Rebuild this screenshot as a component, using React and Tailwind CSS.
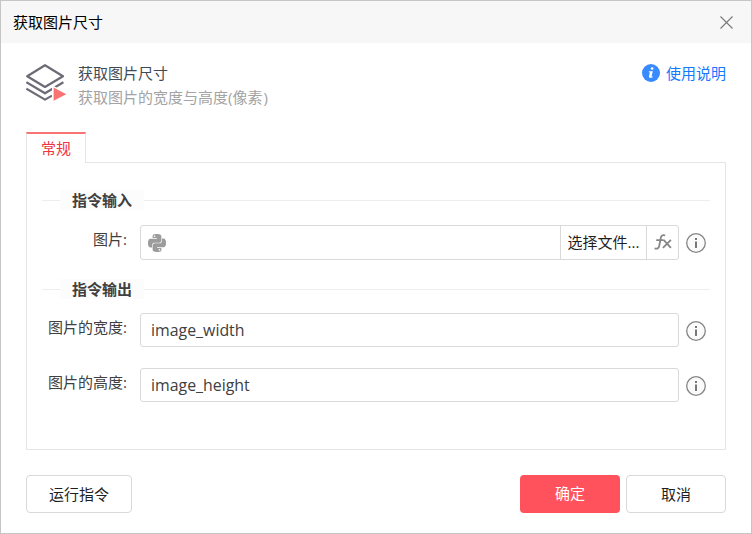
import React from "react";
import { SiPython } from "react-icons/si";

function LayersIcon() {
  return (
    <svg width="42" height="40" viewBox="0 0 42 40" fill="none" className="mt-px shrink-0">
      <g stroke="#6d6c76" strokeWidth="2.2" strokeLinejoin="round">
        <path d="M19 2.2 37 13.2 19 24 1.2 13.2Z" />
        <path d="M0.4 19.2 19 30.3 37.4 19.2" />
        <path d="M0.4 25.6 19 36.6 26 32.6" />
      </g>
      <path d="M26 22V41L43 31.5Z" fill="#fff" />
      <path d="M27.6 24.4V37.8L40.3 31.2Z" fill="#fa7373" />
    </svg>
  );
}

function InfoIcon() {
  return (
    <svg width="20" height="20" viewBox="0 0 20 20" className="ml-[7px] shrink-0">
      <circle cx="10" cy="10" r="9.3" fill="#fafafa" stroke="#858585" strokeWidth="1.3" />
      <rect x="9" y="5" width="2" height="2" fill="#777" />
      <rect x="9" y="8.5" width="2" height="6.5" fill="#777" />
    </svg>
  );
}

function Section({ children }) {
  return (
    <div className="flex h-5 items-center">
      <div className="h-px w-[18px] bg-[#ededed]" />
      <div className="flex h-5 w-[84px] items-center bg-[#fcfcfc] pl-3 text-[15px] font-bold text-[#404040]">
        <span className="whitespace-nowrap">{children}</span>
      </div>
      <div className="h-px flex-1 bg-[#ededed]" />
    </div>
  );
}

function Label({ children }) {
  return (
    <div className="mr-[13px] w-[85px] shrink-0 pb-[7px] text-right text-[15px] whitespace-nowrap text-[#404040]">
      {children}
    </div>
  );
}

function OutputRow({ label, value }) {
  return (
    <div className="flex h-[34px] items-center">
      <Label>{label}</Label>
      <div className="flex h-[34px] w-[539px] items-center rounded-[3px] border border-[#d9d9d9] px-[10px] font-['Open_Sans'] text-[15.9px] text-[#404040]">
        {value}
      </div>
      <div className="pt-[2px]">
        <InfoIcon />
      </div>
    </div>
  );
}

export default function App() {
  return (
    <div className="flex h-[534px] w-[752px] flex-col overflow-hidden border border-[#c5c5c5] bg-white font-['Open_Sans','Noto_Sans_CJK_SC',sans-serif] text-[15px] leading-5">
      <header className="flex h-[42px] shrink-0 items-center justify-between bg-[#f7f7f7] pr-[18px] pl-3">
        <span className="text-black">获取图片尺寸</span>
        <svg width="13" height="13" viewBox="0 0 13 13" stroke="#777" strokeWidth="1.1">
          <path d="M0.5 0.5 12.5 12.5M12.5 0.5 0.5 12.5" />
        </svg>
      </header>

      <main className="flex flex-1 flex-col px-[25px] pt-[19px]">
        <div className="flex h-[70px] items-start">
          <LayersIcon />
          <div className="ml-[10px] flex-1 pt-[1px]">
            <div className="text-[#414b55]">获取图片尺寸</div>
            <div className="mt-1 text-[#a3a3a3]">
              获取图片的宽度与高度(像素<span className="ml-[1px]">)</span>
            </div>
          </div>
          <div className="flex items-center gap-[6px] pt-[1px] text-[#1677ff]">
            <svg width="18" height="18" viewBox="0 0 18 18">
              <circle cx="9" cy="9" r="9" fill="#388bff" />
              <circle cx="10.1" cy="4.5" r="1.35" fill="#fff" />
              <path d="M7 7.3H10.8L9.5 12.4H10.9L10.6 13.3Q8.8 14.2 7.3 13.6 6.7 13.2 7 12.2L7.9 8.2H6.7Z" fill="#fff" />
            </svg>
            <span>使用说明</span>
          </div>
        </div>

        <div className="flex h-[31px] shrink-0">
          <div className="flex w-[60px] items-center justify-center border-x border-t-2 border-x-[#e5e5e5] border-t-[#f87373] pb-[2px] text-[#ef3340]">
            常规
          </div>
          <div className="flex-1 border-b border-[#e5e5e5]" />
        </div>
        <section className="h-[287px] shrink-0 border border-t-0 border-[#e5e5e5] px-[15px] pt-[27px]">
          <Section>指令输入</Section>
          <div className="mt-[15px] flex h-[35px] items-center">
            <Label>图片:</Label>
            <div className="flex h-[35px] w-[539px] items-center rounded-[3px] border border-[#d9d9d9]">
              <div className="flex flex-1 items-center pl-[7px]">
                <SiPython size={18} color="#9c9c9c" />
              </div>
              <div className="flex h-full w-[86px] items-center justify-center border-l border-[#d9d9d9] pb-[2px] whitespace-nowrap text-[#1f1f1f]">
                选择文件...
              </div>
              <div className="flex h-full w-[32px] items-center justify-center border-l border-[#d9d9d9] pb-px">
                <svg width="18" height="16" viewBox="0 0 18 16" fill="none" stroke="#858585" strokeWidth="1.8">
                  <path d="M11.2 1.5Q7.4 0 6.7 4.2L5.2 12Q4.4 15.6 0.6 14.3M2.2 6.2H9.6" />
                  <path d="M9.6 5.8 16.9 13.8M16.9 5.8 8.9 13.8" />
                </svg>
              </div>
            </div>
            <InfoIcon />
          </div>
          <div className="mt-[19px]">
            <Section>指令输出</Section>
          </div>
          <div className="mt-[14px] flex flex-col gap-[21px]">
            <OutputRow label="图片的宽度:" value="image_width" />
            <OutputRow label="图片的高度:" value="image_height" />
          </div>
        </section>

        <footer className="mt-[25px] flex h-[38px] gap-[6px]">
          <button className="mr-auto w-[106px] rounded-[4px] border border-[#d9d9d9] text-[#1f1f1f]">运行指令</button>
          <button className="w-[100px] rounded-[4px] bg-[#ff525d] pb-[2px] text-white">确定</button>
          <button className="w-[100px] rounded-[4px] border border-[#d9d9d9] text-[#1f1f1f]">取消</button>
        </footer>
      </main>
    </div>
  );
}
